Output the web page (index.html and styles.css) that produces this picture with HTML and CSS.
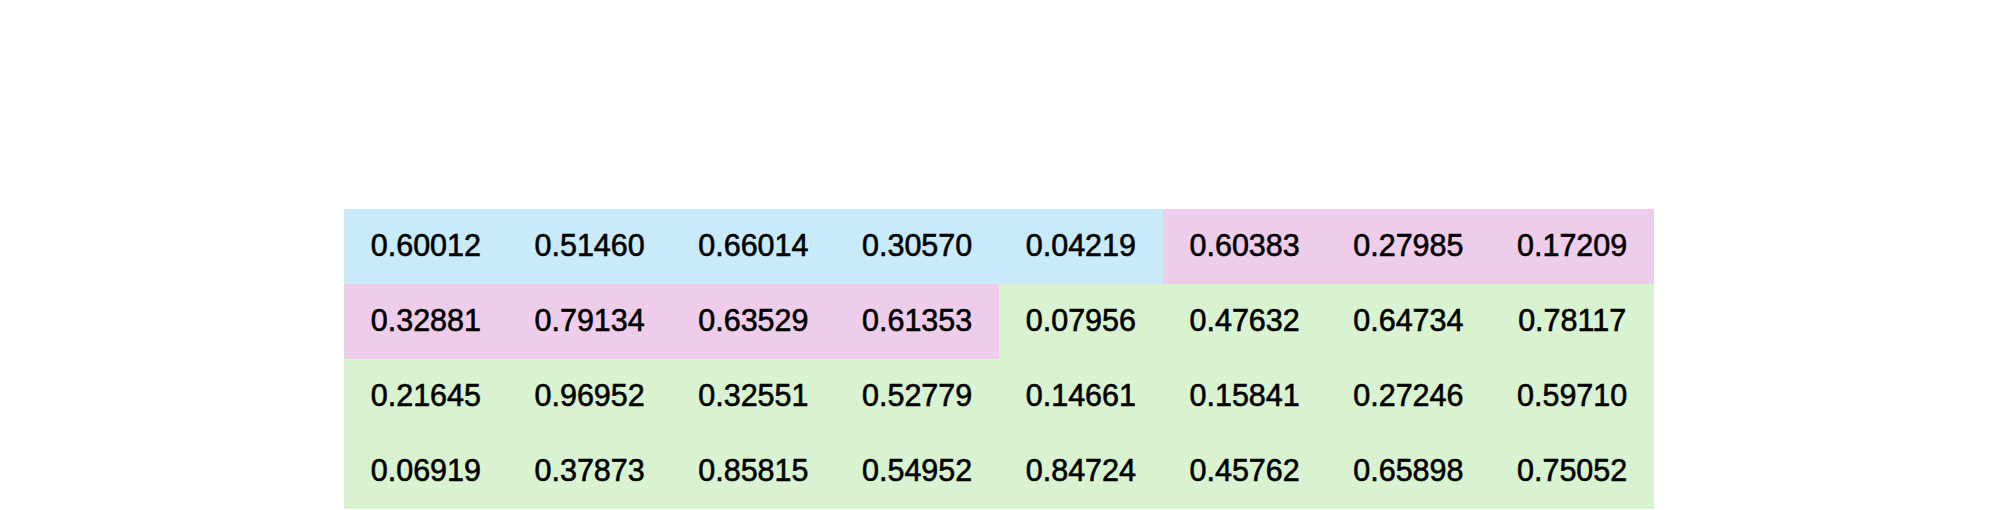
FILE: index.html
```html
<!DOCTYPE html>
<html>
<head>
<meta charset="utf-8">
<link rel="stylesheet" href="styles.css">
</head>
<body>
<div class="page">
  <div class="grid">
    <div class="cell blue">0.60012</div>
    <div class="cell blue">0.51460</div>
    <div class="cell blue">0.66014</div>
    <div class="cell blue">0.30570</div>
    <div class="cell blue">0.04219</div>
    <div class="cell pink">0.60383</div>
    <div class="cell pink">0.27985</div>
    <div class="cell pink">0.17209</div>

    <div class="cell pink">0.32881</div>
    <div class="cell pink">0.79134</div>
    <div class="cell pink">0.63529</div>
    <div class="cell pink">0.61353</div>
    <div class="cell green">0.07956</div>
    <div class="cell green">0.47632</div>
    <div class="cell green">0.64734</div>
    <div class="cell green">0.78117</div>

    <div class="cell green">0.21645</div>
    <div class="cell green">0.96952</div>
    <div class="cell green">0.32551</div>
    <div class="cell green">0.52779</div>
    <div class="cell green">0.14661</div>
    <div class="cell green">0.15841</div>
    <div class="cell green">0.27246</div>
    <div class="cell green">0.59710</div>

    <div class="cell green">0.06919</div>
    <div class="cell green">0.37873</div>
    <div class="cell green">0.85815</div>
    <div class="cell green">0.54952</div>
    <div class="cell green">0.84724</div>
    <div class="cell green">0.45762</div>
    <div class="cell green">0.65898</div>
    <div class="cell green">0.75052</div>
  </div>
</div>
</body>
</html>
```
FILE: styles.css
```css
html, body {
  margin: 0;
  padding: 0;
  background: #ffffff;
}
.page {
  width: 2000px;
  height: 510px;
  padding: 209px 0 0 344px;
  box-sizing: border-box;
}
.grid {
  display: grid;
  grid-template-columns: repeat(8, 163.75px);
  grid-auto-rows: 75px;
  width: 1310px;
}
.cell {
  display: flex;
  align-items: center;
  justify-content: center;
  font-family: "Liberation Sans", Arial, sans-serif;
  font-size: 30.5px;
  font-weight: 400;
  -webkit-text-stroke: 0.6px #000;
  color: #000;
  padding-bottom: 2px;
  box-sizing: border-box;
}
.blue { background: #c9ebf9; }
.pink { background: #eecdeb; }
.green { background: #d9f2d0; }
```
